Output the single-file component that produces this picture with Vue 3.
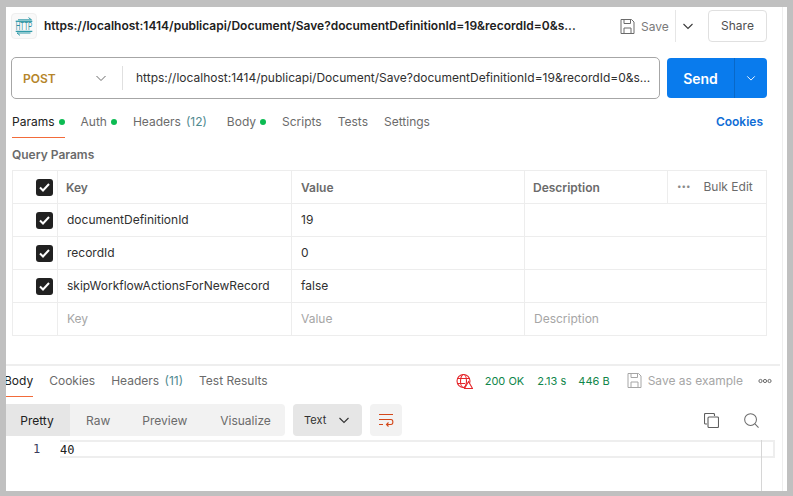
<script setup>
const tabs = [
  { label: 'Params', dot: true, active: true },
  { label: 'Auth', dot: true },
  { label: 'Headers', count: '(12)', wide: true },
  { label: 'Body', dot: true },
  { label: 'Scripts' },
  { label: 'Tests' },
  { label: 'Settings' }
]
const url = 'https://localhost:1414/publicapi/Document/Save?documentDefinitionId=19&recordId=0&s...'
const rows = [
  { key: 'documentDefinitionId', value: '19' },
  { key: 'recordId', value: '0' },
  { key: 'skipWorkflowActionsForNewRecord', value: 'false' }
]
const resTabs = [
  { label: 'Body', active: true },
  { label: 'Cookies' },
  { label: 'Headers', count: '(11)' },
  { label: 'Test Results' }
]
</script>

<template>
  <div class="frame">
    <div class="main">
      <header class="top">
        <div class="http">
          <svg width="24" height="24" viewBox="1 1 24 24" fill="none" stroke="#2f9aa8">
            <path d="M7 6.8H20.5M17.5 4.6L20.5 6.8" />
            <path d="M4.7 8.3H21.3" stroke-width="1.3" />
            <path d="M4.7 18.4H21.3" stroke-width="1.3" />
            <path d="M19.5 20H6M9 22.4L6 20" />
            <text x="4.7" y="16.8" font-size="10" font-family="Liberation Sans" fill="#2f8fa0" stroke="none" textLength="16.6" lengthAdjust="spacingAndGlyphs">HTTP</text>
          </svg>
        </div>
        <div class="title">https://localhost:1414/publicapi/Document/Save?documentDefinitionId=19&amp;recordId=0&amp;s...</div>
        <button class="save">
          <svg width="15" height="15" viewBox="0 0 15 15" fill="none" stroke="#6b6b6b">
            <path d="M1 .5H11.5L14 3V14.5H1Z" /><path d="M4 .5V4.5H10.5V.5M4 14.5V9H11V14.5" />
          </svg>
          <span>Save</span>
        </button>
        <div class="save-more">
          <svg width="12" height="12" viewBox="0 0 12 12" fill="none" stroke="#3a3a3a" stroke-width="1.1"><path d="M1.5 4L6 8.5L10.5 4" /></svg>
        </div>
        <button class="share">Share</button>
      </header>

      <div class="request">
        <div class="urlbar">
          <div class="method">
            <span>POST</span>
            <svg width="12" height="12" viewBox="0 0 12 12" fill="none" stroke="#6b6b6b"><path d="M1.5 4L6 8.5L10.5 4" /></svg>
          </div>
          <div class="url">{{ url }}</div>
        </div>
        <div class="send">
          <span class="send-label">Send</span>
          <span class="send-more">
            <svg width="10" height="10" viewBox="0 0 12 12" fill="none" stroke="#fff" stroke-width="1.1"><path d="M1.5 4L6 8.5L10.5 4" /></svg>
          </span>
        </div>
      </div>

      <nav class="tabs">
        <div v-for="t in tabs" :key="t.label" class="tab" :class="{ active: t.active, wide: t.wide }">
          {{ t.label }}
          <span v-if="t.count" class="count">{{ t.count }}</span>
          <i v-if="t.dot" class="dot"></i>
        </div>
        <div class="cookies">Cookies</div>
      </nav>

      <div class="section">Query Params</div>

      <div class="table">
        <div class="row head">
          <div class="cell check"><span class="box"><svg width="11" height="9" viewBox="0 0 11 9" fill="none" stroke="#fff" stroke-width="2"><path d="M1 4.5L4 7.5L10 1" /></svg></span></div>
          <div class="cell hk">Key</div>
          <div class="cell hv">Value</div>
          <div class="cell hd">
            <span class="hd-title">Description</span>
            <span class="bulk"><span class="dots">•••</span><span>Bulk Edit</span></span>
          </div>
        </div>
        <div v-for="r in rows" :key="r.key" class="row">
          <div class="cell check"><span class="box"><svg width="11" height="9" viewBox="0 0 11 9" fill="none" stroke="#fff" stroke-width="2"><path d="M1 4.5L4 7.5L10 1" /></svg></span></div>
          <div class="cell k">{{ r.key }}</div>
          <div class="cell v">{{ r.value }}</div>
          <div class="cell d"></div>
        </div>
        <div class="row ph">
          <div class="cell check"></div>
          <div class="cell k">Key</div>
          <div class="cell v">Value</div>
          <div class="cell d">Description</div>
        </div>
      </div>

      <div class="res-head">
        <div v-for="t in resTabs" :key="t.label" class="rtab" :class="{ active: t.active }">
          {{ t.label }} <span v-if="t.count" class="count">{{ t.count }}</span>
        </div>
        <div class="status">
          <svg class="globe" width="17" height="16" viewBox="0 0 17 16" fill="none" stroke="#e5262b" stroke-width="1.1">
            <circle cx="7.5" cy="8" r="6.5" />
            <ellipse cx="7.5" cy="8" rx="3" ry="6.5" />
            <path d="M1 5.5H14M1 10.5H9" />
            <path d="M12.5 8.5L16.5 15.5H8.5Z" fill="#fff" />
          </svg>
          <span class="ok s1">200 OK</span>
          <span class="ok s2">2.13 s</span>
          <span class="ok s3">446 B</span>
          <svg class="save2" width="15" height="15" viewBox="0 0 15 15" fill="none" stroke="#a6a6a6">
            <path d="M1 .5H11.5L14 3V14.5H1Z" /><path d="M4 .5V4.5H10.5V.5M4 14.5V9H11V14.5" />
          </svg>
          <span class="example">Save as example</span>
          <svg class="more" width="14" height="6" viewBox="0 0 14 6" fill="none" stroke="#6b6b6b"><circle cx="2.5" cy="3" r="1.6" /><circle cx="7" cy="3" r="1.6" /><circle cx="11.5" cy="3" r="1.6" /></svg>
        </div>
      </div>

      <div class="toolbar">
        <div class="seg">
          <span class="seg-item on">Pretty</span>
          <span class="seg-item raw">Raw</span>
          <span class="seg-item pre">Preview</span>
          <span class="seg-item vis">Visualize</span>
        </div>
        <div class="lang">
          <span>Text</span>
          <svg width="12" height="12" viewBox="0 0 12 12" fill="none" stroke="#333" stroke-width="1.1"><path d="M1.5 4L6 8.5L10.5 4" /></svg>
        </div>
        <div class="wrap">
          <svg width="16" height="16" viewBox="0 0 16 16" fill="none" stroke="#d4481a" stroke-width="1.1">
            <path d="M1 2.5H15M1 7.5H13C15.5 7.5 15.5 12.5 13 12.5H8.5M10.5 10.5L8.5 12.5L10.5 14.5M1 12.5H5" />
          </svg>
        </div>
        <div class="actions">
          <svg width="15" height="15" viewBox="0 0 15 15" fill="none" stroke="#5f5f5f" stroke-width="1.1">
            <path d="M3 11H1.5C1 11 .5 10.5 .5 10V1.5C.5 1 1 .5 1.5 .5H9.5C10 .5 10.5 1 10.5 1.5V3" />
            <rect x="4" y="4" width="10.5" height="10.5" rx="1" />
          </svg>
          <svg class="search" width="15" height="15" viewBox="0 0 16 16" fill="none" stroke="#6b6b6b" stroke-width="1.1">
            <circle cx="7" cy="7" r="6.3" /><path d="M11.7 11.7L15.5 15.5" />
          </svg>
        </div>
      </div>

      <div class="editor">
        <span class="ln">1</span>
        <div class="line">40</div>
        <div class="ruler"></div>
      </div>
    </div>
  </div>
</template>

<style scoped>
.frame {
  width: 793px;
  height: 496px;
  box-sizing: border-box;
  border-style: solid;
  border-color: #c0c0c0;
  border-width: 7px 6px 5px 6px;
  background: #fff;
  overflow: hidden;
  font-family: Inter, "Liberation Sans", sans-serif;
  font-size: 12px;
  color: #212121;
}
.main {
  width: 777px;
  height: 484px;
  box-sizing: border-box;
  border-right: 1px solid #eeeeee;
  display: flex;
  flex-direction: column;
  overflow: hidden;
}
.top {
  height: 38px;
  flex: none;
  display: flex;
  align-items: center;
  padding-left: 5px;
  margin-bottom: 12px;
}
.http {
  width: 26px;
  height: 26px;
  box-sizing: border-box;
  border: 1px solid #efefef;
  background: #f9f9f9;
  border-radius: 4px;
  display: flex;
  align-items: center;
  justify-content: center;
  flex: none;
}
.http svg { display: block; flex: none; }
.title {
  margin-left: 7px;
  width: 533px;
  padding-bottom: 2px;
  font-size: 12px;
  font-weight: 600;
  white-space: nowrap;
  overflow: hidden;
}
.save {
  all: unset;
  margin-left: 43px;
  display: flex;
  align-items: center;
  gap: 6px;
  color: #7a7a7a;
  font-size: 12px;
  width: 55px;
  height: 32px;
  box-sizing: border-box;
}
.save-more {
  height: 32px;
  width: 33px;
  box-sizing: border-box;
  border-left: 1px solid #e6e6e6;
  padding-right: 8px;
  display: flex;
  align-items: center;
  justify-content: center;
}
.share {
  all: unset;
  box-sizing: border-box;
  width: 59px;
  height: 32px;
  border: 1px solid #e0e0e0;
  border-radius: 4px;
  text-align: center;
  line-height: 30px;
  color: #505050;
  font-size: 12px;
}
.request {
  height: 42px;
  flex: none;
  display: flex;
  align-items: center;
  padding-left: 5px;
  gap: 7px;
}
.urlbar {
  width: 649px;
  height: 42px;
  box-sizing: border-box;
  border: 1px solid #a6a6a6;
  border-radius: 5px;
  display: flex;
  align-items: center;
}
.method {
  width: 111px;
  height: 24px;
  box-sizing: border-box;
  padding-left: 11px;
  padding-right: 15px;
  border-right: 1px solid #e0e0e0;
  display: flex;
  align-items: center;
  justify-content: space-between;
  color: #b5852a;
  font-weight: 600;
  font-size: 12px;
}
.url {
  margin-left: 13px;
  padding-bottom: 2px;
  width: 515px;
  white-space: nowrap;
  color: #303030;
}
.send {
  width: 100px;
  height: 40px;
  background: #097bed;
  border-radius: 4px;
  color: #fff;
  display: flex;
  align-items: center;
  font-weight: 600;
  font-size: 14px;
}
.send-label { width: 67px; text-align: center; }
.send-more {
  flex: 1;
  height: 40px;
  border-left: 1px solid #0868c8;
  display: flex;
  align-items: center;
  justify-content: center;
}
.tabs {
  margin-top: 13px;
  margin-left: 6px;
  margin-right: 19px;
  height: 26px;
  flex: none;
  display: flex;
  gap: 16px;
}
.tab {
  height: 26px;
  box-sizing: border-box;
  line-height: 20px;
  color: #6b6b6b;
  display: flex;
  gap: 4px;
  align-items: flex-start;
  white-space: nowrap;
}
.tab.wide { margin-right: 4px; gap: 5px; }
.tab.active { color: #212121; border-bottom: 1px solid #f26b3a; }
.count { color: #4f8a8f; }
.rtab .count { margin-left: 2px; }
.dot {
  width: 6px;
  height: 6px;
  margin-top: 7px;
  border-radius: 50%;
  background: #0cbb52;
}
.cookies {
  margin-left: auto;
  line-height: 20px;
  color: #0f6dd6;
  font-weight: 600;
}
.section {
  margin-top: 7px;
  margin-left: 6px;
  height: 20px;
  line-height: 20px;
  font-size: 12px;
  font-weight: 600;
  color: #6b6b6b;
  flex: none;
}
.table {
  margin-top: 5px;
  margin-left: 6px;
  width: 755px;
  box-sizing: border-box;
  border-top: 1px solid #ededed;
  border-left: 1px solid #ededed;
  flex: none;
}
.row {
  display: grid;
  grid-template-columns: 45px 234px 233px 242px;
  height: 33px;
}
.cell {
  box-sizing: border-box;
  border-right: 1px solid #ededed;
  border-bottom: 1px solid #ededed;
  display: flex;
  align-items: center;
  padding-left: 9px;
  color: #303030;
}
.k, .v, .d { padding-bottom: 2px; }
.check { padding-left: 23px; }
.box {
  width: 17px;
  height: 17px;
  border-radius: 3px;
  background: #212121;
  display: flex;
  align-items: center;
  justify-content: center;
}
.head .cell { font-weight: 600; color: #6b6b6b; }
.head .hk { padding-left: 8px; }
.head .hd { padding-left: 8px; padding-right: 0; justify-content: space-between; }
.ph .k, .ph .v, .ph .d { color: #a6a6a6; }
.bulk {
  width: 99px;
  height: 32px;
  box-sizing: border-box;
  border-left: 1px solid #ededed;
  display: flex;
  align-items: center;
  padding-left: 9px;
  padding-bottom: 2px;
  font-weight: 400;
  gap: 13px;
}
.dots { font-size: 8px; color: #8a8a8a; }
.res-head {
  margin-top: 28px;
  margin-left: -2px;
  border-top: 2px solid #eeeeee;
  padding-right: 8px;
  width: 776px;
  height: 34px;
  box-sizing: border-box;
  flex: none;
  display: flex;
  gap: 16px;
}
.rtab {
  height: 31px;
  box-sizing: border-box;
  line-height: 30px;
  color: #6b6b6b;
  white-space: nowrap;
}
.rtab.active { color: #212121; border-bottom: 1px solid #f26b3a; }
.status {
  margin-left: auto;
  display: flex;
  align-items: center;
  height: 30px;
}
.ok { color: #10864a; font-size: 11px; }
.s1 { margin-left: 12px; }
.s2 { margin-left: 13px; }
.s3 { margin-left: 12px; }
.save2 { margin-left: 17px; margin-bottom: 2px; }
.example { margin-left: 6px; color: #a6a6a6; padding-bottom: 2px; }
.more { margin-left: 15px; }
.toolbar {
  margin-top: 6px;
  display: flex;
  align-items: center;
  height: 32px;
  flex: none;
}
.seg {
  width: 279px;
  height: 32px;
  background: #f2f2f2;
  border-radius: 0 4px 4px 0;
  display: flex;
  align-items: center;
  color: #6b6b6b;
  overflow: hidden;
}
.seg-item { height: 32px; line-height: 34px; }
.on {
  width: 64px;
  box-sizing: border-box;
  padding-right: 2px;
  text-align: center;
  background: #e6e6e6;
  color: #212121;
}
.raw { margin-left: 16px; }
.pre { margin-left: 32px; }
.vis { margin-left: 33px; }
.lang {
  margin-left: 8px;
  width: 69px;
  height: 32px;
  box-sizing: border-box;
  padding: 0 12px 0 11px;
  background: #e6e6e6;
  border-radius: 4px;
  display: flex;
  align-items: center;
  justify-content: space-between;
  color: #303030;
  font-size: 11px;
}
.wrap {
  margin-left: 8px;
  width: 32px;
  height: 32px;
  background: #f2f2f2;
  border-radius: 4px;
  display: flex;
  align-items: center;
  justify-content: center;
}
.actions {
  margin-left: 302px;
  display: flex;
  align-items: center;
  gap: 25px;
}
.editor {
  margin-top: 4px;
  flex: 1;
  display: flex;
  align-items: flex-start;
  position: relative;
}
.ln {
  width: 54px;
  box-sizing: border-box;
  padding-left: 27px;
  height: 18px;
  line-height: 18px;
  font-family: "DejaVu Sans Mono", monospace;
  font-size: 12px;
  color: #3c3c5c;
}
.line {
  width: 715px;
  height: 18px;
  box-sizing: border-box;
  border: 2px solid #eeeeee;
  border-left-width: 0;
  line-height: 16px;
  font-family: "DejaVu Sans Mono", monospace;
  font-size: 12px;
  color: #212121;
}
.ruler {
  position: absolute;
  left: 755px;
  top: 0;
  bottom: 0;
  width: 1px;
  background: #d6d6d6;
}
svg { flex: none; }
</style>

<style>
html, body { margin: 0; padding: 0; background: #fff; }
</style>
